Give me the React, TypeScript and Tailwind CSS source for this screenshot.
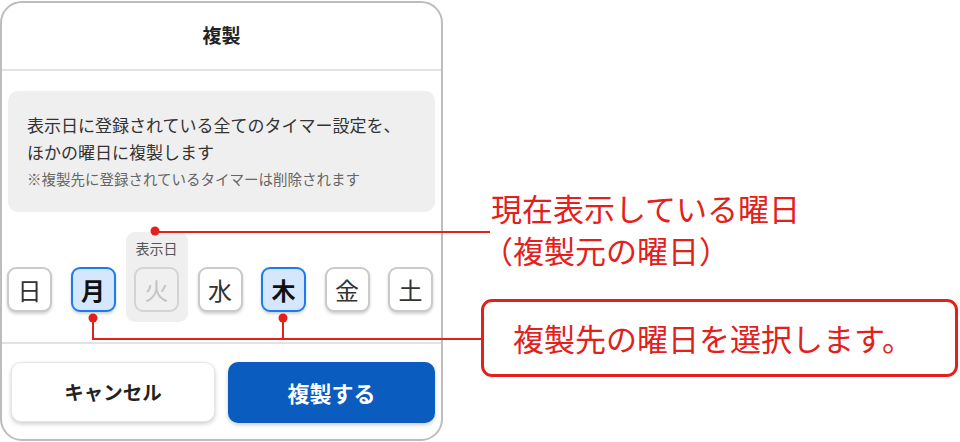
const DAYS: { label: string; state: 'normal' | 'selected' | 'current' }[] = [
  { label: '日', state: 'normal' },
  { label: '月', state: 'selected' },
  { label: '火', state: 'current' },
  { label: '水', state: 'normal' },
  { label: '木', state: 'selected' },
  { label: '金', state: 'normal' },
  { label: '土', state: 'normal' },
];

const FONT = { fontFamily: '"Noto Sans CJK JP", "Noto Sans", sans-serif' };

function DayButton({ label, state }: { label: string; state: 'normal' | 'selected' | 'current' }) {
  if (state === 'current') {
    return (
      <div className="w-[45px] h-[45px] rounded-[9px] border-2 border-[#d4d4d4] bg-[#f0f0f0] flex items-center justify-center text-[24px] text-[#c4c4c4]">
        {label}
      </div>
    );
  }
  if (state === 'selected') {
    return (
      <div className="w-[45px] h-[45px] rounded-[9px] border-2 border-[#1a7cf0] bg-[#d5e7fd] flex items-center justify-center text-[24px] font-bold text-[#111] shadow-[0_2px_3px_rgba(0,0,0,0.18)]">
        {label}
      </div>
    );
  }
  return (
    <div className="w-[45px] h-[45px] rounded-[9px] border-2 border-[#cacaca] bg-white flex items-center justify-center text-[24px] text-[#333] shadow-[0_2px_3px_rgba(0,0,0,0.18)]">
      {label}
    </div>
  );
}

export default function App() {
  return (
    <div className="relative w-[960px] h-[442px] bg-white flex overflow-hidden" style={FONT}>
      {/* Dialog */}
      <div className="mt-[1px] w-[443px] h-[440px] border-2 border-[#bdbdbd] rounded-[22px] bg-white flex flex-col">
        <div className="h-[68px] flex items-center justify-center border-b-2 border-[#e2e2e2]">
          <span className="text-[19px] font-bold text-[#222] pb-[1px]">複製</span>
        </div>

        <div className="px-[6px] pt-[20px]">
          <div className="h-[121px] rounded-[10px] bg-[#efefef] pl-[19px] pt-[20px]">
            <p className="text-[17px] leading-[27px] text-[#333]">表示日に登録されている全てのタイマー設定を、</p>
            <p className="text-[17px] leading-[27px] text-[#333]">ほかの曜日に複製します</p>
            <p className="text-[14.5px] leading-[28px] text-[#666]">※複製先に登録されているタイマーは削除されます</p>
          </div>
        </div>

        <div className="flex items-start justify-between pl-[5px] pr-[8px] pt-[20px] pb-[20px] border-b-2 border-[#e2e2e2]">
          {DAYS.map((d) =>
            d.state === 'current' ? (
              <div
                key={d.label}
                className="-mx-[8.5px] px-[8.5px] pt-[7px] pb-[10px] rounded-[9px] bg-[#efefef] flex flex-col items-center gap-[9px]"
              >
                <span className="text-[14px] leading-[19px] text-[#555]">表示日</span>
                <DayButton label={d.label} state={d.state} />
              </div>
            ) : (
              <div key={d.label} className="mt-[35px]">
                <DayButton label={d.label} state={d.state} />
              </div>
            )
          )}
        </div>

        <div className="flex gap-[13px] pl-[9px] pr-[6px] pt-[18px]">
          <button className="w-[204px] h-[60px] rounded-[10px] bg-white border border-[#e6e6e6] shadow-[0_2px_4px_rgba(0,0,0,0.2)] text-[19.5px] font-bold text-[#222]">
            キャンセル
          </button>
          <button className="w-[207px] h-[61px] rounded-[10px] bg-[#0b5cbf] shadow-[0_2px_4px_rgba(0,0,0,0.2)] text-[22px] font-bold text-white">
            複製する
          </button>
        </div>
      </div>

      {/* Annotations */}
      <div className="flex flex-col pt-[187px]">
        <div className="pl-[48px] text-[31px] leading-[42px] text-[#e3201b]">
          <p>現在表示している曜日</p>
          <p className="-ml-[9px]">（複製元の曜日）</p>
        </div>
        <div className="mt-[28px] ml-[38px] w-[477px] h-[78px] border-[3px] border-[#e3201b] rounded-[11px] flex items-center pl-[29px]">
          <span className="text-[31px] text-[#e3201b]">複製先の曜日を選択します。</span>
        </div>
      </div>

      <svg className="absolute inset-0 pointer-events-none" width="960" height="442">
        <g fill="#e3201b" stroke="#e3201b" strokeWidth="2">
          <line x1="155" y1="232" x2="490" y2="232" />
          <line x1="93" y1="318" x2="93" y2="339" />
          <line x1="283" y1="318" x2="283" y2="339" />
          <line x1="92" y1="339" x2="482" y2="339" />
        </g>
        <g fill="#e3201b">
          <circle cx="155" cy="231" r="4.5" />
          <circle cx="93" cy="318" r="4.5" />
          <circle cx="283" cy="318" r="4.5" />
        </g>
      </svg>
    </div>
  );
}
